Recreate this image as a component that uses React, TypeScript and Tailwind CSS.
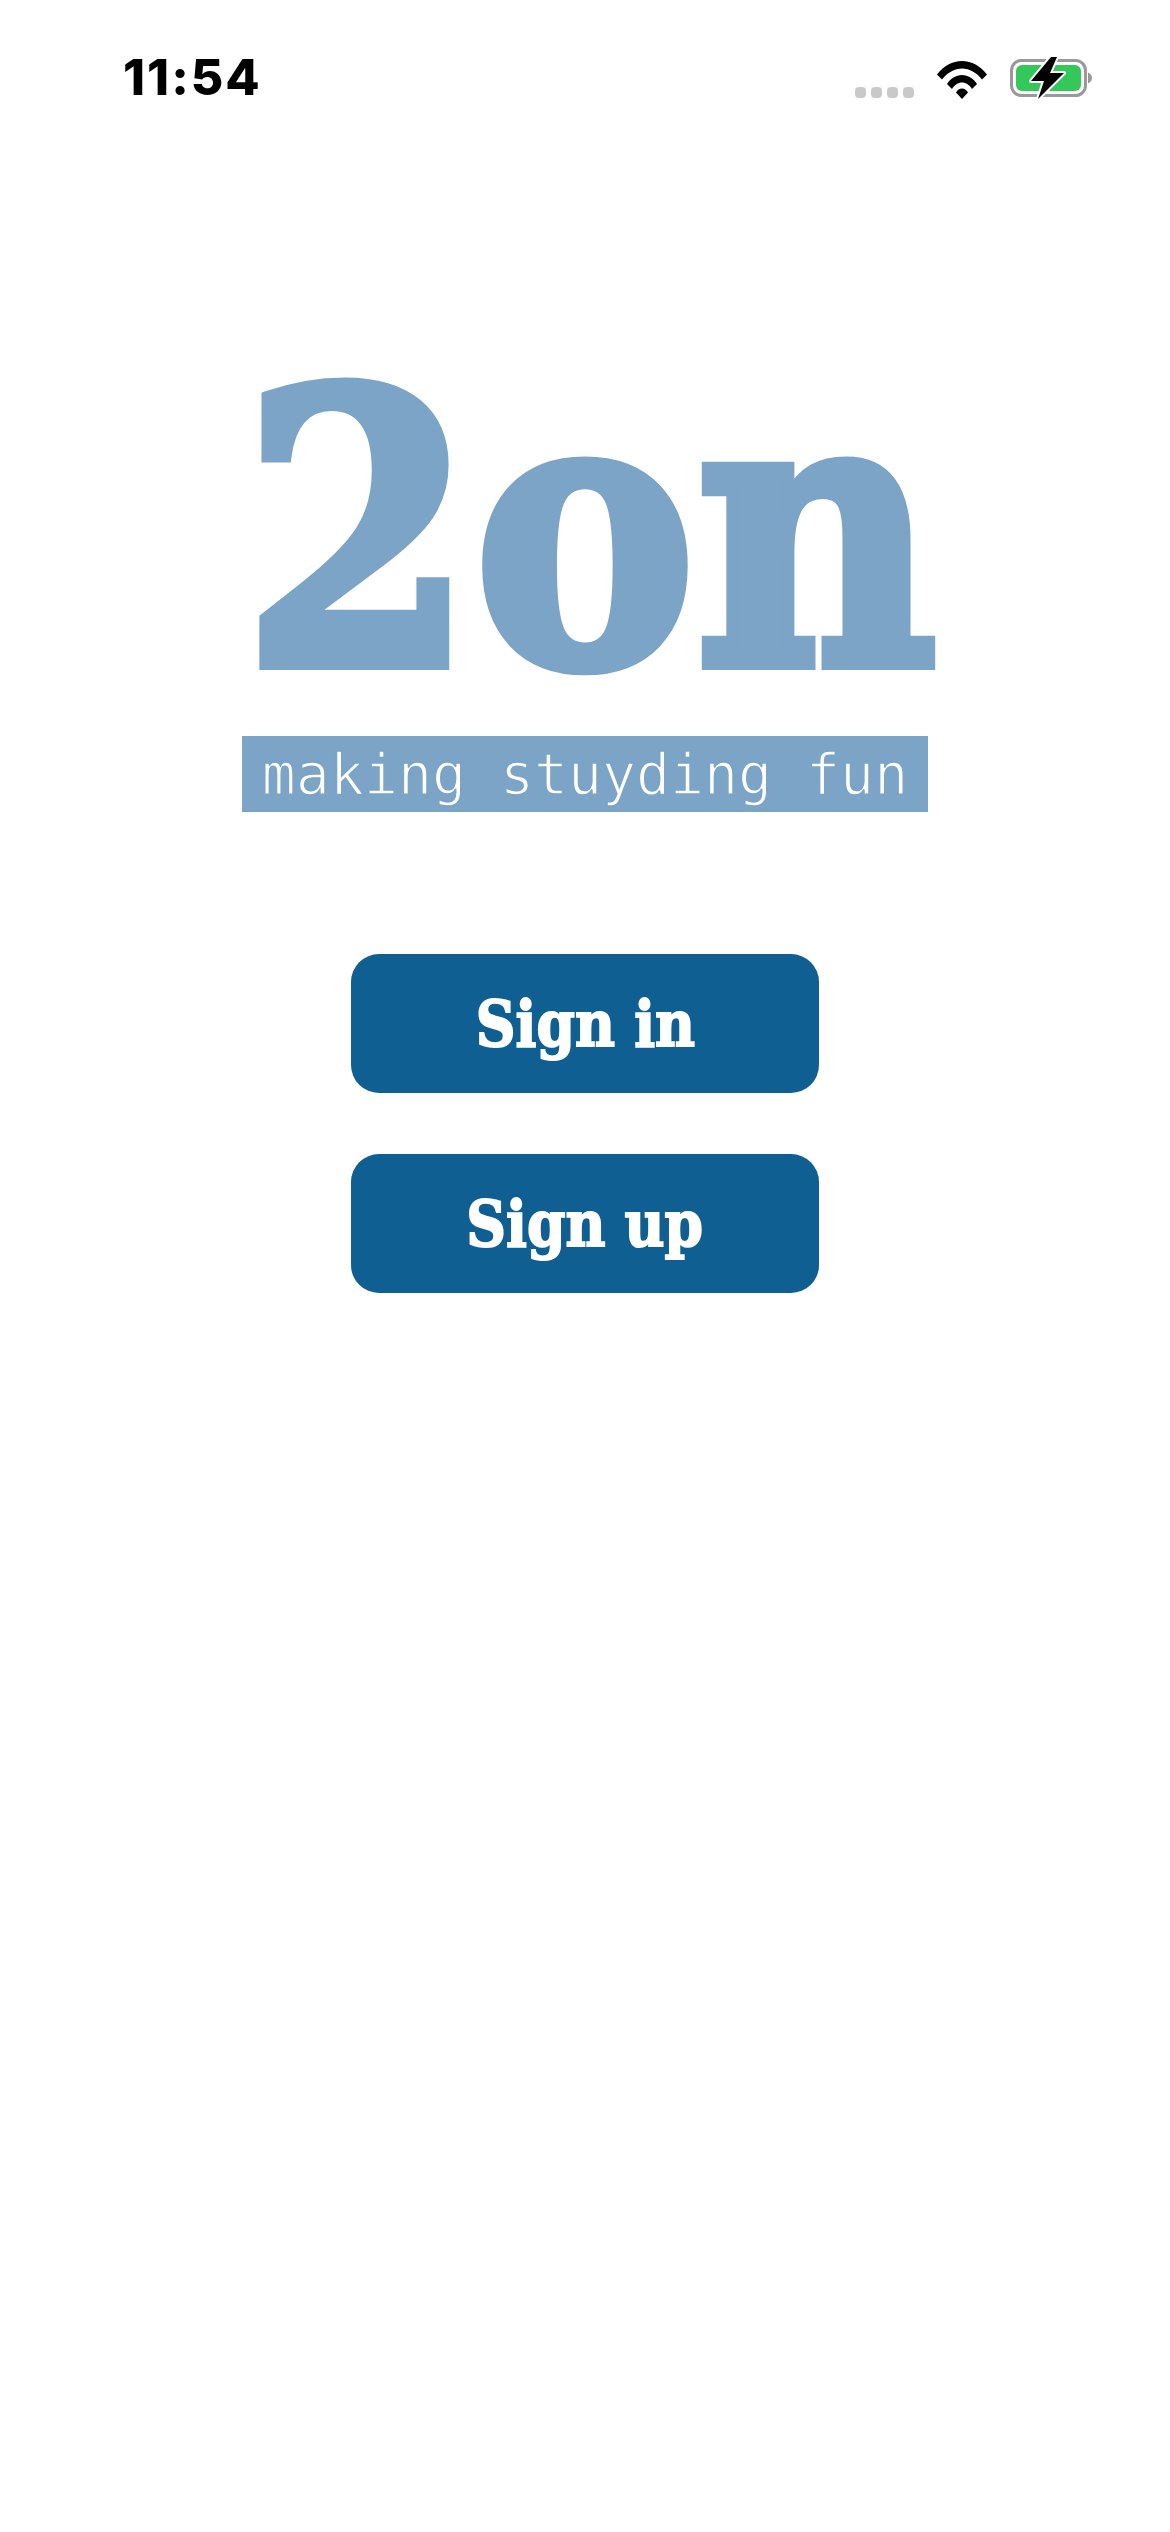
function WifiIcon() {
  return (
    <svg width="50" height="38" viewBox="0 0 50 38" className="block">
      <path d="M0 13.500C6.500 5 15.500 0 25 0s18.500 5 25 13.500L45 18.500C39.500 11.500 32.500 7.500 25 7.500S10.500 11.500 5 18.500Z" fill="#000" />
      <path d="M10 23C13.500 17.500 19 14 25 14s11.500 3.500 15 9L35 28C32.500 24 29 21.500 25 21.500S17.500 24 15 28Z" fill="#000" />
      <path d="M19 31.500C20.500 29 22.500 27.500 25 27.500s4.500 1.500 6 4L25 38Z" fill="#000" />
    </svg>
  )
}

function BatteryIcon() {
  return (
    <svg width="82" height="42" viewBox="0 0 82 42" className="block">
      <rect x="1.500" y="3.500" width="74" height="35" rx="10" fill="none" stroke="#999" strokeWidth="3" />
      <rect x="6" y="8" width="65" height="26" rx="6" fill="#34c759" />
      <path d="M78 15.500C80.500 16.500 82 18.500 82 21S80.500 25.500 78 26.500Z" fill="#999" />
      <path d="M41 0L21 24H34L28 42L54 16H40L47 0Z" fill="#000" stroke="#fff" strokeWidth="4" paintOrder="stroke" strokeLinejoin="round" />
    </svg>
  )
}

export default function App() {
  return (
    <div className="flex min-h-[2532px] flex-col items-center bg-white">
      {/* status bar */}
      <div className="flex h-[120px] w-full items-start justify-between pl-[123px] pr-[78px] pt-[48px]">
        <span className="font-['Inter',sans-serif] text-[50px] leading-[58px] font-extrabold tracking-[2px] text-black">11:54</span>
        <div className="flex items-end gap-[23px] pt-[9px]">
          <div className="mb-[1px] flex gap-[5px]">
            <div className="h-[11px] w-[11px] rounded-[4px] bg-[#c9c9c9]" />
            <div className="h-[11px] w-[11px] rounded-[4px] bg-[#c9c9c9]" />
            <div className="h-[11px] w-[11px] rounded-[4px] bg-[#c9c9c9]" />
            <div className="h-[11px] w-[11px] rounded-[4px] bg-[#c9c9c9]" />
          </div>
          <WifiIcon />
          <BatteryIcon />
        </div>
      </div>

      {/* logo */}
      <div className="mt-[241px] ml-[10px] flex h-[340px] items-center justify-center overflow-visible">
        <span className="inline-block origin-center scale-x-[0.88] font-['DejaVu_Serif',serif] text-[378px] leading-[340px] font-bold whitespace-nowrap text-[#7ba4c7] [-webkit-text-stroke:12px_#7ba4c7]">
          2on
        </span>
      </div>

      <div className="mt-[35px] flex h-[76px] w-[686px] items-center justify-center bg-[#7ba4c7] pt-[3px] font-['DejaVu_Sans_Mono',monospace] text-[56.500px] text-white [-webkit-text-stroke:1.500px_#7ba4c7]">
        making stuyding fun
      </div>

      {/* buttons */}
      <div className="mt-[142px] flex flex-col gap-[61px]">
        <button className="flex h-[139px] w-[468px] items-center justify-center rounded-[28px] bg-[#105f92] font-['DejaVu_Serif',serif] text-[64px] font-bold text-white [-webkit-text-stroke:2px_#fff]">
          <span className="inline-block scale-x-[0.86] whitespace-nowrap">Sign in</span>
        </button>
        <button className="flex h-[139px] w-[468px] items-center justify-center rounded-[28px] bg-[#105f92] font-['DejaVu_Serif',serif] text-[64px] font-bold text-white [-webkit-text-stroke:2px_#fff]">
          <span className="inline-block scale-x-[0.86] whitespace-nowrap">Sign up</span>
        </button>
      </div>
    </div>
  )
}
